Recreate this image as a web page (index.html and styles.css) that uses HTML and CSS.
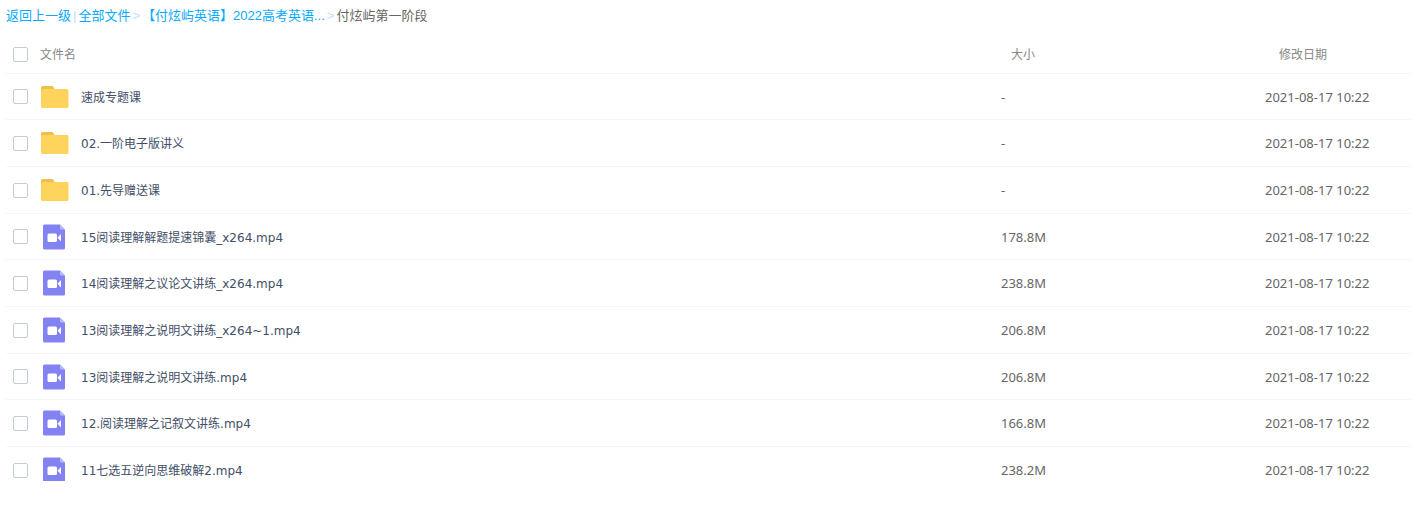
FILE: index.html
```html
<!DOCTYPE html>
<html lang="zh-CN">
<head>
  <meta charset="UTF-8">
  <meta name="viewport" content="width=device-width, initial-scale=1.0">
  <title>付炫屿第一阶段</title>
  <link rel="stylesheet" href="styles.css">
</head>
<body>
  <!-- Shared icons -->
  <svg class="sprite" aria-hidden="true">
    <symbol id="folder" viewBox="0 0 28 24">
      <path d="M0 8V2.5Q0 1 1.5 1H11Q12 1 12.5 2L14 5V8Z" fill="#eebf4c"/>
      <path d="M0 6Q0 4 2 4H26Q27.500 4 27.500 5.500V21.500Q27.500 23 26 23H1.500Q0 23 0 21.500Z" fill="#ffd45c"/>
    </symbol>
    <symbol id="video" viewBox="0 0 28 26">
      <path d="M3.500 .5H19L24 5.500V24Q24 25.500 22.500 25.500H3.500Q2 25.500 2 24V2Q2 .5 3.500 .5Z" fill="#8283f0"/>
      <path d="M19 .5L24 5.500H20.500Q19 5.500 19 4Z" fill="#b9baf8"/>
      <rect x="6.500" y="9.500" width="9.500" height="8.500" rx="1.500" fill="#fff"/>
      <path d="M16.500 13.800L20 10V17.500Z" fill="#fff"/>
    </symbol>
  </svg>

  <nav class="breadcrumb">
    <a href="#">返回上一级</a>
    <span class="divider">|</span>
    <a href="#">全部文件</a>
    <span class="arrow">&gt;</span>
    <a href="#">【付炫屿英语】2022高考英语...</a>
    <span class="arrow">&gt;</span>
    <span class="current">付炫屿第一阶段</span>
  </nav>

  <div class="file-list">
    <table>
      <thead>
        <tr>
          <th class="col-check"><input type="checkbox" aria-label="全选"></th>
          <th class="col-name">文件名</th>
          <th class="col-size">大小</th>
          <th class="col-date">修改日期</th>
        </tr>
      </thead>
      <tbody>
        <tr>
          <td><input type="checkbox" id="f1"></td>
          <td><label class="name" for="f1"><svg class="icon folder"><use href="#folder"/></svg><span>速成专题课</span></label></td>
          <td class="meta">-</td>
          <td class="meta">2021-08-17 10:22</td>
        </tr>
        <tr>
          <td><input type="checkbox" id="f2"></td>
          <td><label class="name" for="f2"><svg class="icon folder"><use href="#folder"/></svg><span>02.一阶电子版讲义</span></label></td>
          <td class="meta">-</td>
          <td class="meta">2021-08-17 10:22</td>
        </tr>
        <tr>
          <td><input type="checkbox" id="f3"></td>
          <td><label class="name" for="f3"><svg class="icon folder"><use href="#folder"/></svg><span>01.先导赠送课</span></label></td>
          <td class="meta">-</td>
          <td class="meta">2021-08-17 10:22</td>
        </tr>
        <tr>
          <td><input type="checkbox" id="f4"></td>
          <td><label class="name" for="f4"><svg class="icon"><use href="#video"/></svg><span>15阅读理解解题提速锦囊_x264.mp4</span></label></td>
          <td class="meta">178.8M</td>
          <td class="meta">2021-08-17 10:22</td>
        </tr>
        <tr>
          <td><input type="checkbox" id="f5"></td>
          <td><label class="name" for="f5"><svg class="icon"><use href="#video"/></svg><span>14阅读理解之议论文讲练_x264.mp4</span></label></td>
          <td class="meta">238.8M</td>
          <td class="meta">2021-08-17 10:22</td>
        </tr>
        <tr>
          <td><input type="checkbox" id="f6"></td>
          <td><label class="name" for="f6"><svg class="icon"><use href="#video"/></svg><span>13阅读理解之说明文讲练_x264~1.mp4</span></label></td>
          <td class="meta">206.8M</td>
          <td class="meta">2021-08-17 10:22</td>
        </tr>
        <tr>
          <td><input type="checkbox" id="f7"></td>
          <td><label class="name" for="f7"><svg class="icon"><use href="#video"/></svg><span>13阅读理解之说明文讲练.mp4</span></label></td>
          <td class="meta">206.8M</td>
          <td class="meta">2021-08-17 10:22</td>
        </tr>
        <tr>
          <td><input type="checkbox" id="f8"></td>
          <td><label class="name" for="f8"><svg class="icon"><use href="#video"/></svg><span>12.阅读理解之记叙文讲练.mp4</span></label></td>
          <td class="meta">166.8M</td>
          <td class="meta">2021-08-17 10:22</td>
        </tr>
        <tr>
          <td><input type="checkbox" id="f9"></td>
          <td><label class="name" for="f9"><svg class="icon"><use href="#video"/></svg><span>11七选五逆向思维破解2.mp4</span></label></td>
          <td class="meta">238.2M</td>
          <td class="meta">2021-08-17 10:22</td>
        </tr>
      </tbody>
    </table>
  </div>
</body>
</html>
```
FILE: styles.css
```css
body {
  margin: 0;
  padding: 0 6px;
  background: #fff;
  color: #424e67;
  font: 12px/16px "DejaVu Sans", "Noto Sans CJK SC", sans-serif;
}

.sprite {
  position: absolute;
  width: 0;
  height: 0;
}

.breadcrumb {
  display: flex;
  align-items: center;
  gap: 2px;
  height: 31px;
  margin-bottom: 5px;
  font: 13px/16px "Liberation Sans", "Noto Sans CJK SC", sans-serif;
  white-space: nowrap;
}

.breadcrumb a {
  color: #09aaff;
  text-decoration: none;
}

.breadcrumb .divider,
.breadcrumb .arrow {
  color: #c4dbfe;
}

.breadcrumb .current {
  color: #666;
}

/* The list is cut off at the bottom of its pane */
.file-list {
  height: 445px;
  overflow: hidden;
}

table {
  width: 100%;
  table-layout: fixed;
  border-collapse: separate;
  border-spacing: 0;
}

th,
td {
  box-sizing: border-box;
  height: 47px;
  padding: 0;
  border-bottom: 1px solid #f2f6fd;
  text-align: left;
  vertical-align: middle;
}

tbody tr:nth-child(3n+1) td {
  height: 46px;
}

th {
  height: 38px;
  border-color: #f5f5f5;
  color: #888;
  font-weight: normal;
}

.col-check {
  width: 34px;
}

.col-size {
  width: 264px;
  padding-left: 10px;
}

.col-date {
  width: 146px;
  padding-left: 14px;
}

input[type="checkbox"] {
  display: block;
  box-sizing: border-box;
  width: 15px;
  height: 15px;
  margin: 0 0 0 7px;
  appearance: none;
  border: 1px solid #c3cad9;
  border-radius: 2px;
  background: #fff;
}

input[type="checkbox"]:checked {
  border-color: #09aaff;
  background: #09aaff;
}

.name {
  display: flex;
  align-items: center;
  gap: 12px;
}

.name span {
  padding-top: 2px;
}

.icon {
  width: 28px;
  height: 26px;
  margin-left: 1px;
}

.icon.folder {
  height: 24px;
}

.meta {
  color: #666;
  font: 13px/16px "Noto Sans", sans-serif;
}
```
